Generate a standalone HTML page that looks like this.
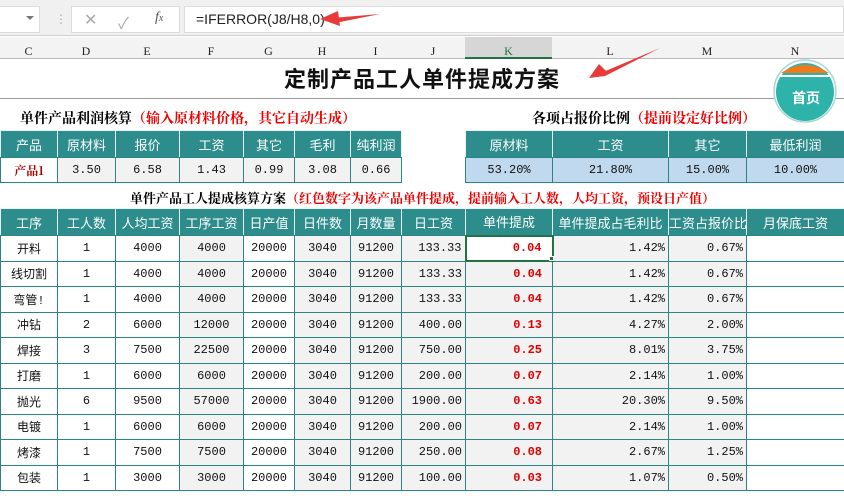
<!DOCTYPE html><html><head><meta charset="utf-8"><style>
*{margin:0;padding:0;box-sizing:border-box}
body{width:844px;height:498px;overflow:hidden;background:#fff;font-family:"Liberation Sans","Noto Sans CJK SC",sans-serif;position:relative}
.abs{position:absolute}
table{border-collapse:collapse;table-layout:fixed;position:absolute}
td{border:1px solid #2a8585;text-align:center;font-size:12px;color:#111;white-space:nowrap;overflow:hidden;font-family:"Liberation Mono","Noto Sans CJK SC",monospace}
td.h{background:#2d8c8c;color:#fff;font-size:13px;font-family:"Liberation Sans","Noto Sans CJK SC",sans-serif;border-color:#e8f4f4 #e8f4f4 #2a8585 #e8f4f4}
.g{background:#f2f2f2}.r{text-align:right;padding-right:3px}
.red{color:#e00000;font-weight:bold}
.blue{background:#c0d9ee}
.colh{font-family:"Liberation Serif",serif;font-size:12px;color:#222;text-align:center;top:44px}
</style></head><body>
<div class="abs" style="left:0;top:0;width:844px;height:36px;background:#f0f0f0;border-bottom:1px solid #d0d0d0"></div>
<div class="abs" style="left:0;top:6px;width:40px;height:27px;background:#fff;border:1px solid #ddd;border-left:none"></div>
<div class="abs" style="left:26px;top:16px;width:0;height:0;border-left:4px solid transparent;border-right:4px solid transparent;border-top:4px solid #777"></div>
<div class="abs" style="left:55px;top:12px;color:#aaa;font-size:12px">⋮</div>
<div class="abs" style="left:71px;top:6px;width:109px;height:27px;background:#fff;border:1px solid #ddd"></div>
<div class="abs" style="left:84px;top:10px;color:#aaa;font-size:16px">✕</div>
<div class="abs" style="left:118px;top:10px;color:#aaa;font-size:16px">✓</div>
<div class="abs" style="left:155px;top:10px;color:#555;font-size:14px;font-style:italic;font-family:'Liberation Serif',serif">f<span style="font-size:10px">x</span></div>
<div class="abs" style="left:184px;top:6px;width:660px;height:27px;background:#fff;border:1px solid #ddd"></div>
<div class="abs" style="left:196px;top:11px;font-size:14px;color:#222">=IFERROR(J8/H8,0)</div>
<svg class="abs" style="left:310px;top:8px" width="72" height="20"><path d="M10 11 L70 6 L30 14 Z" fill="#e83a3a"/><path d="M10 11 L28 3 L30 18 Z" fill="#e83a3a"/></svg>
<div class="abs" style="left:0;top:37px;width:844px;height:22px;background:#f3f3f3;border-bottom:1px solid #bbb"></div>
<div class="abs" style="left:465px;top:37px;width:87px;height:22px;background:#d6d6d6;border-bottom:2px solid #217346"></div>
<div class="abs colh" style="left:0;width:57px">C</div>
<div class="abs colh" style="left:57px;width:58px">D</div>
<div class="abs colh" style="left:115px;width:64px">E</div>
<div class="abs colh" style="left:179px;width:64px">F</div>
<div class="abs colh" style="left:243px;width:51px">G</div>
<div class="abs colh" style="left:294px;width:56px">H</div>
<div class="abs colh" style="left:350px;width:51px">I</div>
<div class="abs colh" style="left:401px;width:64px">J</div>
<div class="abs colh" style="left:465px;width:87px;color:#217346">K</div>
<div class="abs colh" style="left:552px;width:116px">L</div>
<div class="abs colh" style="left:668px;width:78px">M</div>
<div class="abs colh" style="left:746px;width:98px">N</div>
<div class="abs" style="left:0;top:62px;width:844px;text-align:center;font-size:22px;font-weight:bold;color:#111;letter-spacing:1px">定制产品工人单件提成方案</div>
<div class="abs" style="left:0;top:98px;width:844px;height:1px;background:#999"></div>
<svg class="abs" style="left:585px;top:42px" width="80" height="40"><path d="M4 36 L75 6 L20 34 Z" fill="#e83a3a"/><path d="M4 36 L14 22 L24 32 Z" fill="#e83a3a"/></svg>
<svg class="abs" style="left:771px;top:59px" width="70" height="64"><circle cx="34" cy="32" r="31" fill="#fff" stroke="#a8d8d4" stroke-width="1.5"/><circle cx="34" cy="33" r="29" fill="#2eb3aa"/><path d="M14 14 A29 29 0 0 1 54 14 L54 14 Z" fill="none"/><path d="M10 14 Q34 -2 58 14 Z" fill="#f07a1a"/><path d="M8 17 L60 17" stroke="#fff" stroke-width="2"/><text x="35" y="44" font-size="14" font-weight="bold" fill="#fff" text-anchor="middle" font-family="Noto Sans CJK SC,sans-serif">首页</text></svg>
<div class="abs" style="left:20px;top:108px;font-size:14px;font-weight:bold;font-family:'Noto Serif CJK SC',serif">单件产品利润核算<span style="color:#e00">（输入原材料价格，其它自动生成）</span></div>
<div class="abs" style="left:532px;top:108px;font-size:14px;font-weight:bold;font-family:'Noto Serif CJK SC',serif">各项占报价比例<span style="color:#e00">（提前设定好比例）</span></div>
<table style="left:0;top:130px;width:401px">
<colgroup><col width="57"><col width="58"><col width="64"><col width="64"><col width="51"><col width="56"><col width="51"></colgroup>
<tr style="height:27px"><td class="h">产品</td><td class="h">原材料</td><td class="h">报价</td><td class="h">工资</td><td class="h">其它</td><td class="h">毛利</td><td class="h">纯利润</td></tr>
<tr style="height:25px"><td style="color:#b00000;font-weight:bold;font-family:'Noto Serif CJK SC',serif">产品1</td><td class="g">3.50</td><td class="g">6.58</td><td class="g">1.43</td><td class="g">0.99</td><td class="g">3.08</td><td class="g">0.66</td></tr>
</table>
<table style="left:465px;top:130px;width:379px">
<colgroup><col width="87"><col width="116"><col width="78"><col width="98"></colgroup>
<tr style="height:27px"><td class="h">原材料</td><td class="h">工资</td><td class="h">其它</td><td class="h">最低利润</td></tr>
<tr style="height:25px"><td class="blue">53.20%</td><td class="blue">21.80%</td><td class="blue">15.00%</td><td class="blue">10.00%</td></tr>
</table>
<div class="abs" style="left:130px;top:188px;font-size:13px;font-weight:bold;font-family:'Noto Serif CJK SC',serif">单件产品工人提成核算方案<span style="color:#e00">（红色数字为该产品单件提成，提前输入工人数，人均工资，预设日产值）</span></div>
<table style="left:0;top:208px;width:844px">
<colgroup><col width="57"><col width="58"><col width="64"><col width="64"><col width="51"><col width="56"><col width="51"><col width="64"><col width="87"><col width="116"><col width="78"><col width="98"></colgroup>
<tr style="height:27px"><td class="h">工序</td><td class="h">工人数</td><td class="h">人均工资</td><td class="h">工序工资</td><td class="h">日产值</td><td class="h">日件数</td><td class="h">月数量</td><td class="h">日工资</td><td class="h">单件提成</td><td class="h">单件提成占毛利比</td><td class="h">工资占报价比</td><td class="h">月保底工资</td></tr>
<tr style="height:25.5px"><td>开料</td><td>1</td><td>4000</td><td class="g">4000</td><td>20000</td><td class="g">3040</td><td class="g">91200</td><td class="g r">133.33</td><td class="r red" style="border:2px solid #217346;padding-right:10px">0.04</td><td class="g r">1.42%</td><td class="g r">0.67%</td><td></td></tr>
<tr style="height:25.5px"><td>线切割</td><td>1</td><td>4000</td><td class="g">4000</td><td>20000</td><td class="g">3040</td><td class="g">91200</td><td class="g r">133.33</td><td class="g r red" style="padding-right:10px">0.04</td><td class="g r">1.42%</td><td class="g r">0.67%</td><td></td></tr>
<tr style="height:25.5px"><td>弯管!</td><td>1</td><td>4000</td><td class="g">4000</td><td>20000</td><td class="g">3040</td><td class="g">91200</td><td class="g r">133.33</td><td class="g r red" style="padding-right:10px">0.04</td><td class="g r">1.42%</td><td class="g r">0.67%</td><td></td></tr>
<tr style="height:25.5px"><td>冲钻</td><td>2</td><td>6000</td><td class="g">12000</td><td>20000</td><td class="g">3040</td><td class="g">91200</td><td class="g r">400.00</td><td class="g r red" style="padding-right:10px">0.13</td><td class="g r">4.27%</td><td class="g r">2.00%</td><td></td></tr>
<tr style="height:25.5px"><td>焊接</td><td>3</td><td>7500</td><td class="g">22500</td><td>20000</td><td class="g">3040</td><td class="g">91200</td><td class="g r">750.00</td><td class="g r red" style="padding-right:10px">0.25</td><td class="g r">8.01%</td><td class="g r">3.75%</td><td></td></tr>
<tr style="height:25.5px"><td>打磨</td><td>1</td><td>6000</td><td class="g">6000</td><td>20000</td><td class="g">3040</td><td class="g">91200</td><td class="g r">200.00</td><td class="g r red" style="padding-right:10px">0.07</td><td class="g r">2.14%</td><td class="g r">1.00%</td><td></td></tr>
<tr style="height:25.5px"><td>抛光</td><td>6</td><td>9500</td><td class="g">57000</td><td>20000</td><td class="g">3040</td><td class="g">91200</td><td class="g r">1900.00</td><td class="g r red" style="padding-right:10px">0.63</td><td class="g r">20.30%</td><td class="g r">9.50%</td><td></td></tr>
<tr style="height:25.5px"><td>电镀</td><td>1</td><td>6000</td><td class="g">6000</td><td>20000</td><td class="g">3040</td><td class="g">91200</td><td class="g r">200.00</td><td class="g r red" style="padding-right:10px">0.07</td><td class="g r">2.14%</td><td class="g r">1.00%</td><td></td></tr>
<tr style="height:25.5px"><td>烤漆</td><td>1</td><td>7500</td><td class="g">7500</td><td>20000</td><td class="g">3040</td><td class="g">91200</td><td class="g r">250.00</td><td class="g r red" style="padding-right:10px">0.08</td><td class="g r">2.67%</td><td class="g r">1.25%</td><td></td></tr>
<tr style="height:25.5px"><td>包装</td><td>1</td><td>3000</td><td class="g">3000</td><td>20000</td><td class="g">3040</td><td class="g">91200</td><td class="g r">100.00</td><td class="g r red" style="padding-right:10px">0.03</td><td class="g r">1.07%</td><td class="g r">0.50%</td><td></td></tr>
</table>
<div class="abs" style="left:549px;top:256px;width:5px;height:5px;background:#217346;border:1px solid #fff"></div>
</body></html>
